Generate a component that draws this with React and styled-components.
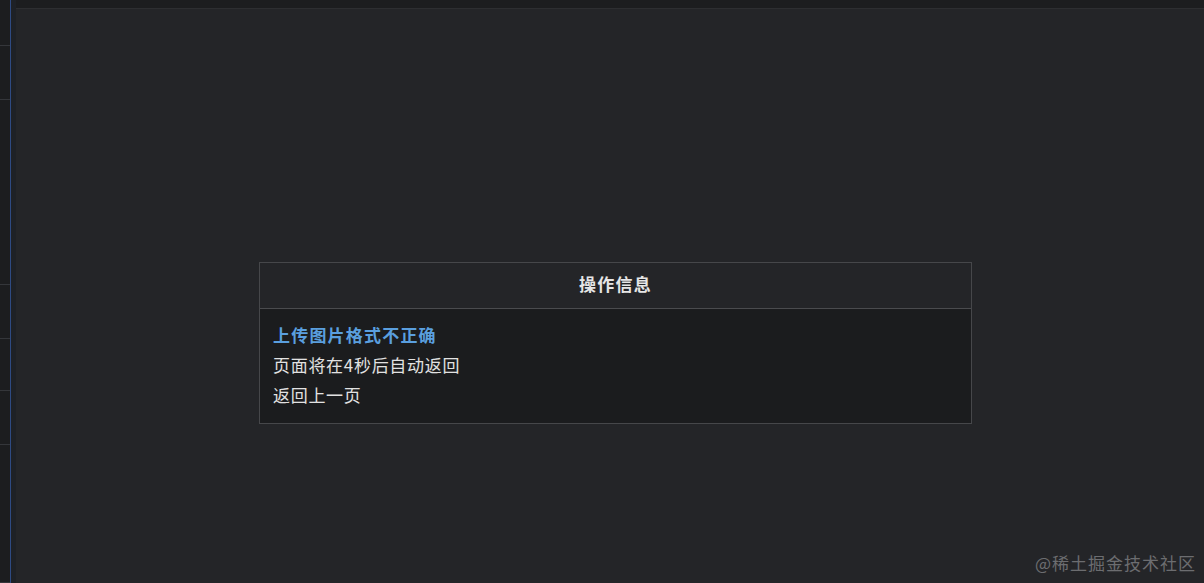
import React from "react";
import styled, { createGlobalStyle } from "styled-components";

const GlobalStyle = createGlobalStyle`
  html, body {
    margin: 0;
    padding: 0;
    background: #242528;
  }
  #root {
    height: 583px;
  }
`;

const Frame = styled.div`
  display: flex;
  width: 1204px;
  height: 583px;
  overflow: hidden;
  background: #242528;
  font-family: "Noto Sans CJK SC", "Liberation Serif", serif;
`;

const Sidebar = styled.div`
  width: 10px;
  display: flex;
  flex-direction: column;
  background: #1c1d1f;
`;

const SideItem = styled.div`
  height: ${(p) => p.h}px;
  flex: none;
  border-bottom: 1px solid #34363a;
  box-sizing: border-box;
`;

const Rule = styled.div`
  width: 1px;
  background: #2e4a82;
`;

const Gutter = styled.div`
  width: 5px;
  background: #1e2126;
`;

const Main = styled.div`
  flex: 1;
  display: flex;
  flex-direction: column;
`;

const TopBar = styled.div`
  height: 8px;
  background: #1c1d1f;
  border-bottom: 1px solid #2d2e31;
`;

const Content = styled.div`
  flex: 1;
  padding: 253px 0 0 243px;
  position: relative;
`;

const Card = styled.div`
  width: 711px;
  border: 1px solid #46474a;
`;

const CardHead = styled.div`
  height: 46px;
  box-sizing: border-box;
  padding-bottom: 4px;
  display: flex;
  align-items: center;
  justify-content: center;
  background: #242528;
  border-bottom: 1px solid #4a4b4e;
  color: #e6e6e6;
  font-size: 17px;
  font-weight: 700;
  letter-spacing: 1.2px;
`;

const CardBody = styled.div`
  background: #1b1c1e;
  padding: 11px 13px 13px;
  display: flex;
  flex-direction: column;
`;

const Line = styled.div`
  line-height: 30px;
  font-size: 17px;
  color: ${(p) => (p.accent ? "#5a9fdf" : "#e2e2e2")};
  font-weight: ${(p) => (p.accent ? 700 : 400)};
  letter-spacing: ${(p) => (p.accent ? "1.2px" : "0.7px")};
`;

const Watermark = styled.div`
  position: absolute;
  right: 8px;
  bottom: 8px;
  color: #6c6d70;
  font-size: 17px;
  letter-spacing: 1px;
  font-family: "Noto Sans CJK SC", "Liberation Sans", sans-serif;
`;

export default function App() {
  const items = [46, 54, 185, 54, 52, 54, 138];
  return (
    <>
      <GlobalStyle />
      <Frame>
        <Sidebar>
          {items.map((h, i) => (
            <SideItem key={i} h={h} />
          ))}
        </Sidebar>
        <Rule />
        <Gutter />
        <Main>
          <TopBar />
          <Content>
            <Card>
              <CardHead>操作信息</CardHead>
              <CardBody>
                <Line accent>上传图片格式不正确</Line>
                <Line>页面将在4秒后自动返回</Line>
                <Line>返回上一页</Line>
              </CardBody>
            </Card>
            <Watermark>@稀土掘金技术社区</Watermark>
          </Content>
        </Main>
      </Frame>
    </>
  );
}
